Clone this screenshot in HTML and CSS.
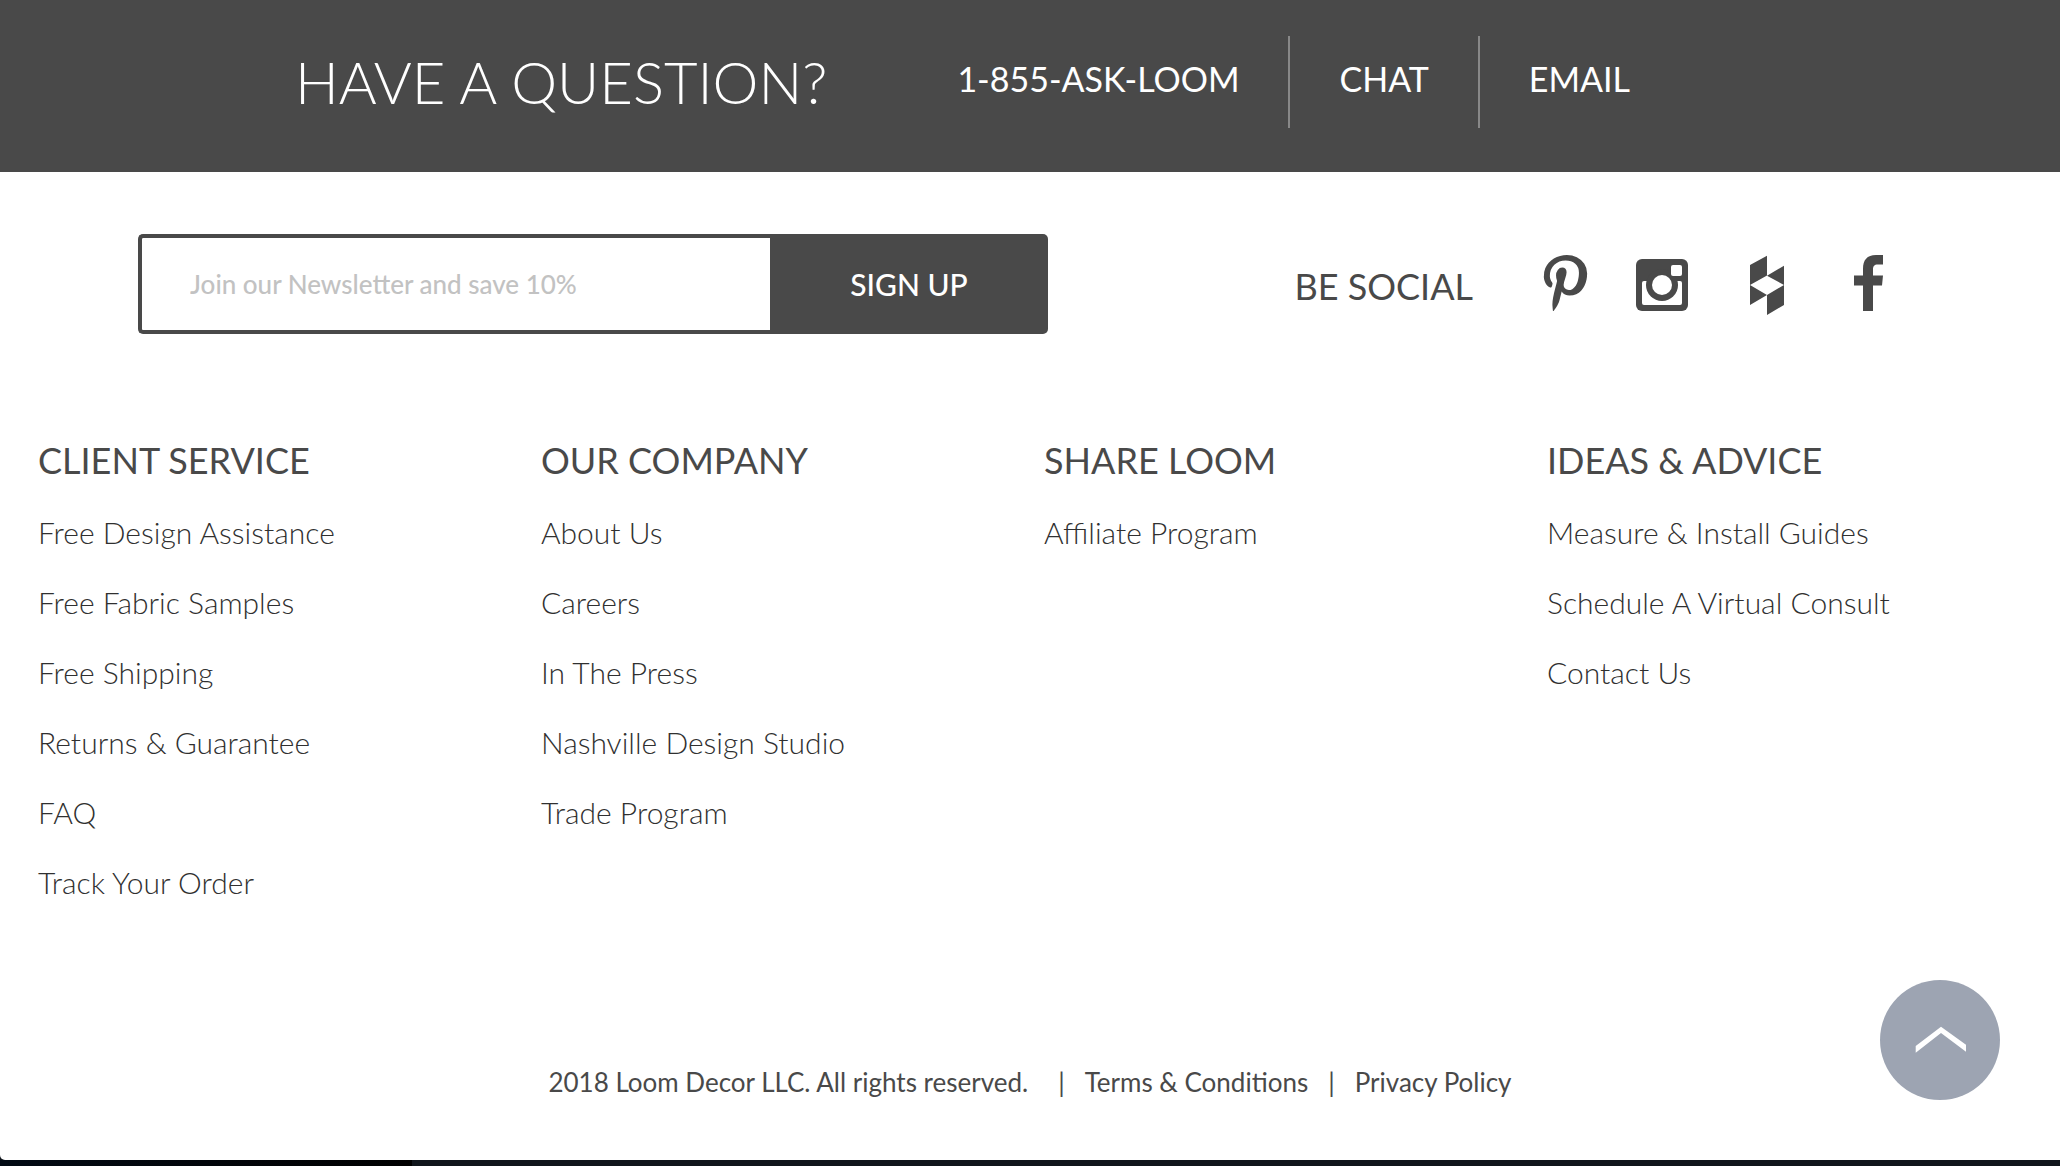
FILE: index.html
```html
<!DOCTYPE html>
<html lang="en">
<head>
<meta charset="utf-8">
<meta name="viewport" content="width=device-width, initial-scale=1">
<title>Loom Decor</title>
<link rel="stylesheet" href="styles.css">
</head>
<body>
<footer class="site-footer" id="top">
  <section class="question">
    <h1 class="question-title">HAVE A QUESTION?</h1>
    <nav class="contact" aria-label="Contact">
      <a class="contact-link" href="tel:1-855-275-5666">1-855-ASK-LOOM</a>
      <a class="contact-link" href="#chat">CHAT</a>
      <a class="contact-link" href="#email">EMAIL</a>
    </nav>
  </section>

  <section class="connect">
    <form class="newsletter">
      <input class="newsletter-input" type="email" aria-label="Email address" placeholder="Join our Newsletter and save 10%">
      <button class="newsletter-button" type="submit">SIGN UP</button>
    </form>
    <div class="social">
      <h2 class="social-title">BE SOCIAL</h2>
      <div class="social-links">
        <a href="#pinterest" aria-label="Pinterest">
          <svg class="social-icon" viewBox="0 0 64 68"><path transform="translate(10 5) scale(.0337)" d="M0 597q0-108 37.500-203.500T141 227t152-123 185-78T680 0q158 0 294 66.500T1195 260t85 287q0 96-19 188t-60 177-100 149.500-145 103T756 1203q-68 0-135-32t-96-88q-10 39-28 112.500t-23.500 95-20.500 71-26 71-32 62.500-46 77.500-62 86.500l-14 5-9-10q-15-157-15-188 0-92 21.500-206.500T337 972t52-203q-32-65-32-169 0-83 52-156t132-73q61 0 95 40.500T670 514q0 66-44 191t-44 187q0 63 45 104.500t109 41.500q55 0 102-25t78.500-68 56-95 38-110.500 20-111T1037 529q0-173-109.500-269.500T642 163q-200 0-334 129.500T174 621q0 44 12.500 85t27 65 27 45.500T253 847q0 28-15 73t-37 45q-2 0-17-3-51-15-90.500-56t-61-94.500-32.500-108T0 597z"/></svg>
        </a>
        <a href="#instagram" aria-label="Instagram">
          <svg class="social-icon" viewBox="0 0 64 68"><rect x="1" y="9" width="52" height="52" rx="6"/><rect x="7" y="31" width="40" height="24" rx="2" fill="#fff"/><circle cx="27" cy="35" r="16"/><circle cx="27" cy="35" r="10" fill="#fff"/><rect x="36" y="15" width="11" height="11" rx="2" fill="#fff"/></svg>
        </a>
        <a href="#houzz" aria-label="Houzz">
          <svg class="social-icon" viewBox="0 0 64 68"><path d="M14 15 31 5.700V25.500L14 35zM31 25.700 48 15.700V35zM14 35 31 45 14 55zM48 35V55L31 65V45z"/></svg>
        </a>
        <a href="#facebook" aria-label="Facebook">
          <svg class="social-icon" viewBox="0 0 64 68"><path d="M26 61V35.500h-9V25.500h9V19c0-9 4-14 13-14h7v9.500H41c-4 0-5 2-5 5v6h10l-1 10h-9V61z"/></svg>
        </a>
      </div>
    </div>
  </section>

  <nav class="sitemap" aria-label="Site">
    <section>
      <h2 class="sitemap-title">CLIENT SERVICE</h2>
      <ul class="sitemap-list">
        <li><a href="#design">Free Design Assistance</a></li>
        <li><a href="#samples">Free Fabric Samples</a></li>
        <li><a href="#shipping">Free Shipping</a></li>
        <li><a href="#returns">Returns &amp; Guarantee</a></li>
        <li><a href="#faq">FAQ</a></li>
        <li><a href="#track">Track Your Order</a></li>
      </ul>
    </section>
    <section>
      <h2 class="sitemap-title">OUR COMPANY</h2>
      <ul class="sitemap-list">
        <li><a href="#about">About Us</a></li>
        <li><a href="#careers">Careers</a></li>
        <li><a href="#press">In The Press</a></li>
        <li><a href="#studio">Nashville Design Studio</a></li>
        <li><a href="#trade">Trade Program</a></li>
      </ul>
    </section>
    <section>
      <h2 class="sitemap-title">SHARE LOOM</h2>
      <ul class="sitemap-list">
        <li><a href="#affiliate">Affiliate Program</a></li>
      </ul>
    </section>
    <section>
      <h2 class="sitemap-title">IDEAS &amp; ADVICE</h2>
      <ul class="sitemap-list">
        <li><a href="#guides">Measure &amp; Install Guides</a></li>
        <li><a href="#consult">Schedule A Virtual Consult</a></li>
        <li><a href="#contact">Contact Us</a></li>
      </ul>
    </section>
  </nav>

  <div class="legal">
    <span class="copyright">2018 Loom Decor LLC. All rights reserved.</span>
    <span>|</span>
    <a href="#terms">Terms &amp; Conditions</a>
    <span>|</span>
    <a href="#privacy">Privacy Policy</a>
  </div>
</footer>
<div class="edge"></div>
<a class="back-to-top" href="#top" aria-label="Back to top">
  <svg viewBox="0 0 120 120"><path d="M35.700 66 61 46.700 86 64.700V71.700L61 53 35.700 72.700z"/></svg>
</a>
</body>
</html>
```
FILE: styles.css
```css
* {
  box-sizing: border-box;
}

body {
  margin: 0;
  background: #10151b;
  color: #494949;
  font-family: Lato, "Open Sans", sans-serif;
}

h1, h2, ul {
  margin: 0;
  padding: 0;
}

a {
  color: inherit;
  text-decoration: none;
}

.site-footer {
  background: #fff;
  border-bottom-left-radius: 5px;
}

/* Contact banner */
.question {
  display: flex;
  justify-content: center;
  gap: 130px;
  padding: 36px 135px 44px 0;
  background: #494949;
  color: #fff;
}

.question-title {
  font-size: 58px;
  font-weight: 300;
  line-height: 92px;
}

.contact {
  display: flex;
}

.contact-link {
  height: 92px;
  padding: 0 49px;
  border-left: 2px solid #888;
  font-size: 34px;
  font-weight: 400;
  line-height: 86px;
}

.contact-link:first-child {
  padding-left: 0;
  border-left: 0;
}

.contact-link:last-child {
  padding-right: 0;
}

/* Newsletter and social row */
.connect {
  display: flex;
  justify-content: space-between;
  align-items: center;
  padding: 62px 159px 0 138px;
}

.newsletter {
  display: flex;
  flex: 0 1 910px;
  height: 100px;
}

.newsletter-input {
  flex: 1;
  min-width: 0;
  padding: 0 48px;
  border: 4px solid #494949;
  border-right: 0;
  border-radius: 5px 0 0 5px;
  background: #fff;
  color: #494949;
  font: 500 26px Lato, "Open Sans", sans-serif;
}

.newsletter-input::placeholder {
  color: #c2c2c2;
  opacity: 1;
}

.newsletter-button {
  width: 278px;
  border: 0;
  border-radius: 0 5px 5px 0;
  background: #494949;
  color: #fff;
  font: 500 30px Lato, "Open Sans", sans-serif;
}

.social {
  display: flex;
  align-items: center;
  gap: 61px;
}

.social-title,
.sitemap-title {
  font-size: 36px;
  font-weight: 400;
  line-height: 44px;
}

.social-title {
  padding-top: 4px;
}

.social-links {
  display: flex;
  gap: 37px;
}

.social-icon {
  display: block;
  width: 64px;
  height: 68px;
  fill: #494949;
}

/* Link columns */
.sitemap {
  display: grid;
  grid-template-columns: repeat(4, 1fr);
  padding: 104px 10px 0 38px;
}

.sitemap-list {
  margin-top: 15px;
  color: #303030;
  list-style: none;
  font-size: 30px;
  font-weight: 300;
  line-height: 70px;
}

/* Legal line */
.legal {
  display: flex;
  justify-content: center;
  gap: 20px;
  padding: 149px 0 62px;
  font-size: 26px;
  font-weight: 400;
  line-height: 32px;
}

.copyright {
  margin-right: 10px;
}

.edge {
  height: 6px;
  background: linear-gradient(90deg, #020a14, #000 20%, #10151b 20%);
}

.back-to-top {
  position: fixed;
  right: 60px;
  bottom: 66px;
  width: 120px;
  height: 120px;
  border-radius: 50%;
  background: #9da4b2;
  fill: #fff;
}
```
